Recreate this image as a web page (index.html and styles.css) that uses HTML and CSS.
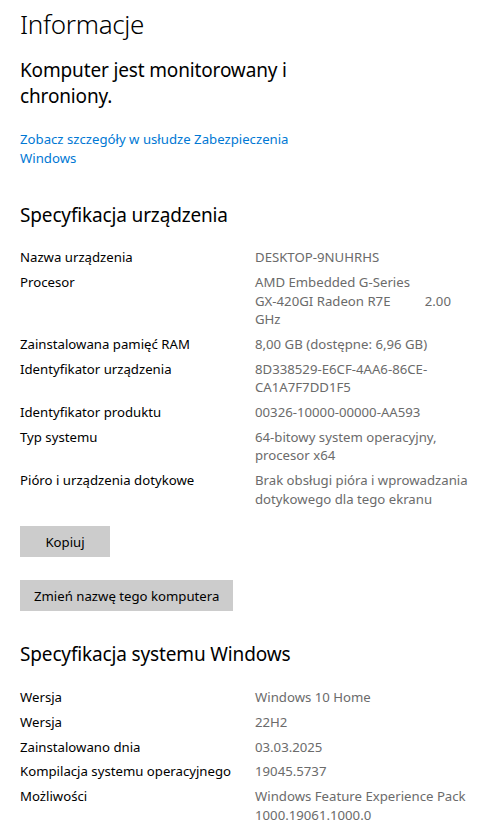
FILE: index.html
```html
<!DOCTYPE html>
<html lang="pl">
<head>
<meta charset="utf-8">
<title>Informacje</title>
<link rel="stylesheet" href="styles.css">
</head>
<body>
<main class="page">
  <h1 class="title">Informacje</h1>
  <p class="status">Komputer jest monitorowany i chroniony.</p>
  <a class="link" href="#">Zobacz szczegóły w usłudze Zabezpieczenia Windows</a>

  <h2 class="section-title">Specyfikacja urządzenia</h2>
  <dl class="specs">
    <div class="row"><dt>Nazwa urządzenia</dt><dd>DESKTOP-9NUHRHS</dd></div>
    <div class="row"><dt>Procesor</dt><dd class="pre">AMD Embedded G-Series GX-&#8288;420GI Radeon R7E          2.00 GHz</dd></div>
    <div class="row"><dt>Zainstalowana pamięć RAM</dt><dd>8,00 GB (dostępne: 6,96 GB)</dd></div>
    <div class="row"><dt>Identyfikator urządzenia</dt><dd>8D338529-E6CF-4AA6-86CE-CA1A7F7DD1F5</dd></div>
    <div class="row"><dt>Identyfikator produktu</dt><dd>00326-10000-00000-AA593</dd></div>
    <div class="row"><dt>Typ systemu</dt><dd>64-bitowy system operacyjny, procesor x64</dd></div>
    <div class="row"><dt>Pióro i urządzenia dotykowe</dt><dd>Brak obsługi pióra i wprowadzania dotykowego dla tego ekranu</dd></div>
  </dl>
  <div class="actions">
    <button class="btn btn-copy" type="button">Kopiuj</button>
    <button class="btn" type="button">Zmień nazwę tego komputera</button>
  </div>

  <h2 class="section-title section-title-2">Specyfikacja systemu Windows</h2>
  <dl class="specs specs-2">
    <div class="row"><dt>Wersja</dt><dd>Windows 10 Home</dd></div>
    <div class="row"><dt>Wersja</dt><dd>22H2</dd></div>
    <div class="row"><dt>Zainstalowano dnia</dt><dd>03.03.2025</dd></div>
    <div class="row"><dt>Kompilacja systemu operacyjnego</dt><dd>19045.5737</dd></div>
    <div class="row"><dt>Możliwości</dt><dd>Windows Feature Experience Pack 1000.19061.1000.0</dd></div>
  </dl>
</main>
</body>
</html>
```

FILE: styles.css
```css
html, body {
  margin: 0;
  padding: 0;
  background: #ffffff;
}

body {
  font-family: "Noto Sans", "Open Sans", sans-serif;
  color: #000000;
  font-size: 13.2px;
  line-height: 18.67px;
}

.page {
  padding: 4px 20px 0 20px;
  display: flex;
  flex-direction: column;
  align-items: flex-start;
}

.title {
  margin: 0;
  font-size: 26px;
  font-weight: 300;
  letter-spacing: -0.3px;
  line-height: 40px;
}

.status {
  margin: 13px 0 0 0;
  font-size: 19px;
  letter-spacing: -0.15px;
  line-height: 26px;
  max-width: 300px;
}

.link {
  margin-top: 21px;
  color: #0078d4;
  text-decoration: none;
  max-width: 290px;
}

.section-title {
  margin: 34px 0 0 0;
  font-size: 19px;
  font-weight: 400;
  letter-spacing: -0.15px;
  line-height: 28px;
}

.section-title-2 {
  margin-top: 29px;
}

.specs {
  margin: 19px 0 0 0;
  display: flex;
  flex-direction: column;
  gap: 6px;
}

.specs-2 {
  margin-top: 20px;
}

.row {
  display: grid;
  grid-template-columns: 235px 214px;
}

.row dt {
  margin: 0;
}

.row dd {
  margin: 0;
  color: #6b6b6b;
}

.pre {
  white-space: pre-wrap;
}

.actions {
  margin-top: 18px;
  display: flex;
  flex-direction: column;
  align-items: flex-start;
  gap: 23px;
}

.btn {
  height: 31px;
  padding: 0 14px;
  border: none;
  background: #cccccc;
  color: #000000;
  font-family: inherit;
  font-size: 13.2px;
}

.btn-copy {
  min-width: 90px;
}
```
